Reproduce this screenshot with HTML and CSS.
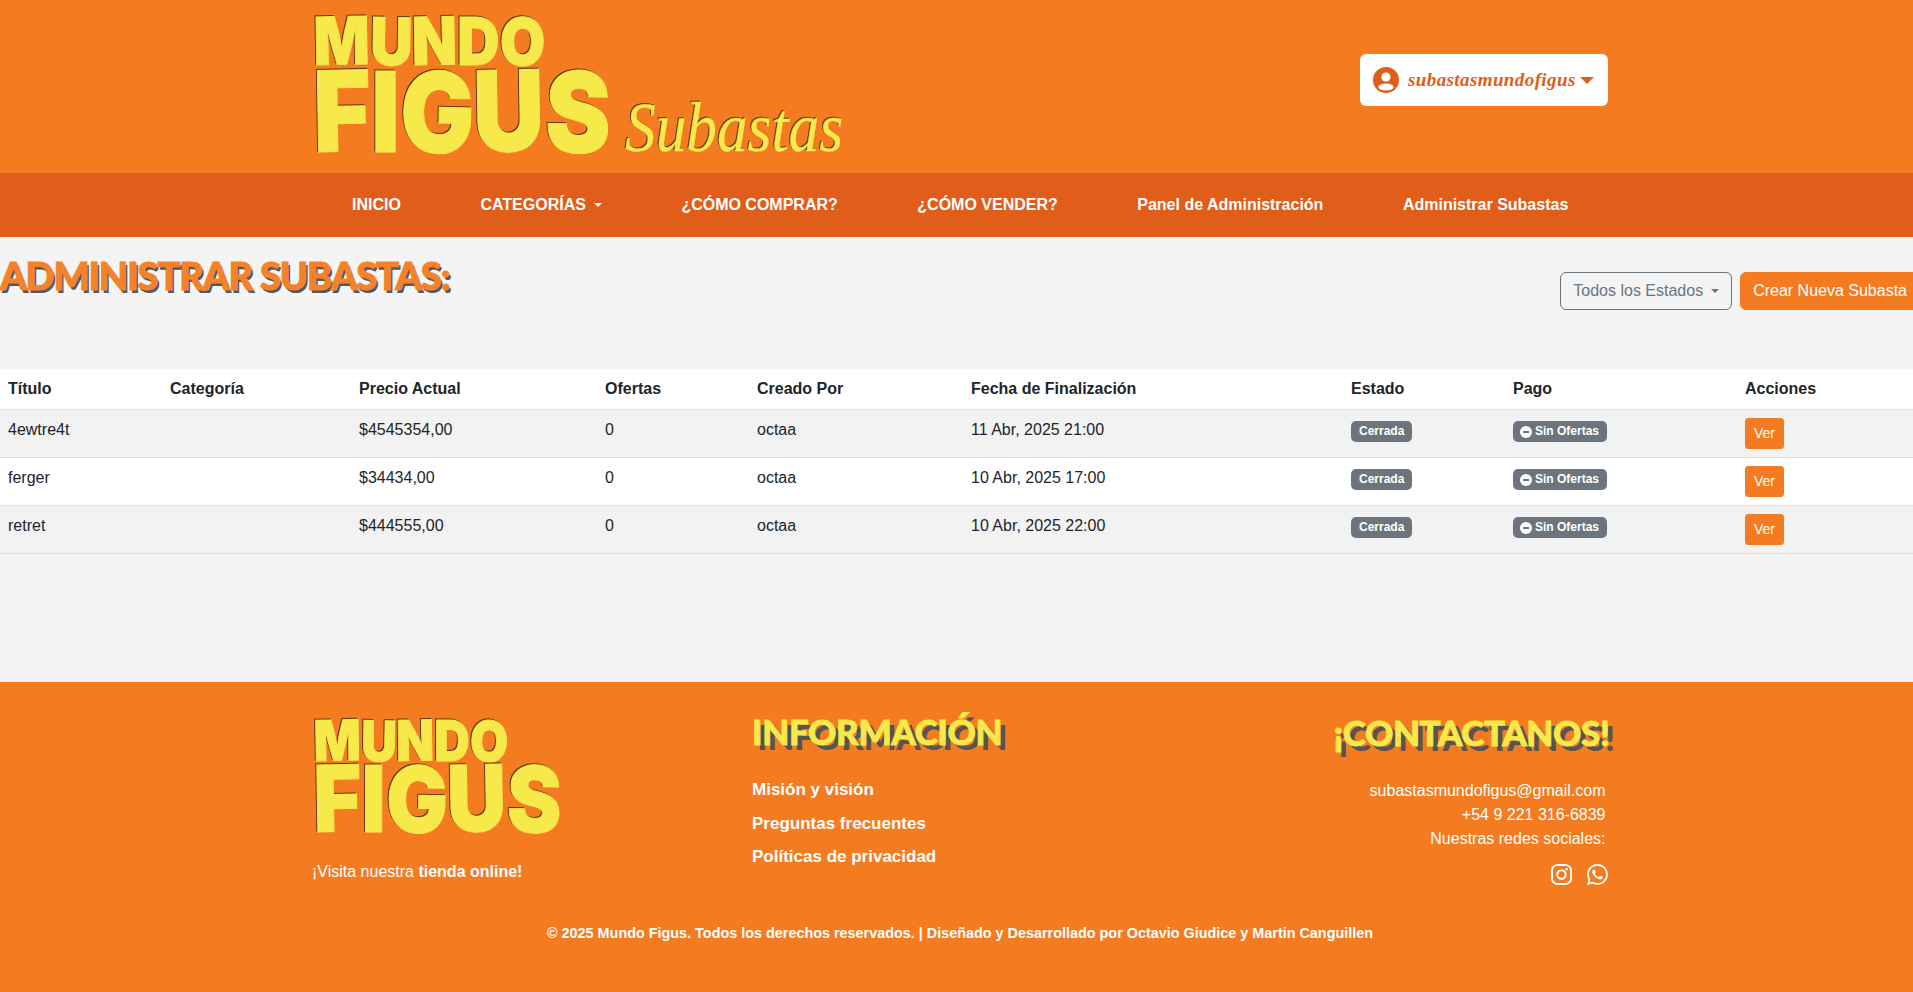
FILE: index.html
```html
<!DOCTYPE html>
<html lang="en">
<head>
  <meta charset="UTF-8">
  <meta name="viewport" content="width=device-width, initial-scale=1.0">
  <title>Mundo Figus Subastas</title>
  <link rel="stylesheet" href="styles.css">
</head>
<body>
  <header class="top-header">
    <div class="wrap top-inner">
      <svg class="logo" width="535" height="150" viewBox="0 0 535 150" role="img" aria-label="Mundo Figus Subastas">
        <text class="logo-mundo" x="0" y="64" textLength="231" lengthAdjust="spacingAndGlyphs" rotate="-1 1 -1 0 1">MUNDO</text>
        <text class="logo-figus" x="0" y="151" textLength="296" lengthAdjust="spacingAndGlyphs" rotate="-1 0 1 -1 1">FIGUS</text>
        <text class="logo-sub" x="311" y="150" textLength="218" lengthAdjust="spacingAndGlyphs">Subastas</text>
      </svg>
      <button class="user-btn" type="button">
        <svg class="user-icon" width="26" height="26" viewBox="0 0 26 26">
          <circle cx="13" cy="13" r="13" fill="#e05d1a"/>
          <circle cx="13" cy="10" r="4.6" fill="#fff"/>
          <ellipse cx="13" cy="20" rx="7.6" ry="3.6" fill="#fff"/>
        </svg>
        <span class="user-name">subastasmundofigus</span>
        <span class="user-caret"></span>
      </button>
    </div>
  </header>

  <nav class="main-nav">
    <div class="wrap nav-inner">
      <a href="#">INICIO</a>
      <a href="#">CATEGORÍAS<span class="caret"></span></a>
      <a href="#">¿CÓMO COMPRAR?</a>
      <a href="#">¿CÓMO VENDER?</a>
      <a href="#">Panel de Administración</a>
      <a href="#">Administrar Subastas</a>
    </div>
  </nav>

  <main class="content">
    <div class="title-row">
      <h1>Administrar Subastas:</h1>
      <div class="title-actions">
        <button class="btn-outline" type="button">Todos los Estados<span class="caret"></span></button>
        <button class="btn-orange" type="button">Crear Nueva Subasta</button>
      </div>
    </div>

    <table class="auctions">
      <colgroup>
        <col class="c-title"><col class="c-cat"><col class="c-price"><col class="c-bids"><col class="c-user"><col class="c-date"><col class="c-state"><col class="c-pay"><col class="c-actions">
      </colgroup>
      <thead>
        <tr>
          <th>Título</th>
          <th>Categoría</th>
          <th>Precio Actual</th>
          <th>Ofertas</th>
          <th>Creado Por</th>
          <th>Fecha de Finalización</th>
          <th>Estado</th>
          <th>Pago</th>
          <th>Acciones</th>
        </tr>
      </thead>
      <tbody>
        <tr>
          <td>4ewtre4t</td>
          <td></td>
          <td>$4545354,00</td>
          <td>0</td>
          <td>octaa</td>
          <td>11 Abr, 2025 21:00</td>
          <td><span class="badge">Cerrada</span></td>
          <td><span class="badge"><span class="dash"></span>Sin Ofertas</span></td>
          <td><button class="btn-orange btn-small" type="button">Ver</button></td>
        </tr>
        <tr>
          <td>ferger</td>
          <td></td>
          <td>$34434,00</td>
          <td>0</td>
          <td>octaa</td>
          <td>10 Abr, 2025 17:00</td>
          <td><span class="badge">Cerrada</span></td>
          <td><span class="badge"><span class="dash"></span>Sin Ofertas</span></td>
          <td><button class="btn-orange btn-small" type="button">Ver</button></td>
        </tr>
        <tr>
          <td>retret</td>
          <td></td>
          <td>$444555,00</td>
          <td>0</td>
          <td>octaa</td>
          <td>10 Abr, 2025 22:00</td>
          <td><span class="badge">Cerrada</span></td>
          <td><span class="badge"><span class="dash"></span>Sin Ofertas</span></td>
          <td><button class="btn-orange btn-small" type="button">Ver</button></td>
        </tr>
      </tbody>
    </table>
  </main>

  <footer class="site-footer">
    <div class="wrap footer-cols">
      <div class="footer-brand">
        <svg class="logo" width="250" height="120" viewBox="0 0 250 120" role="img" aria-label="Mundo Figus">
          <text class="logo-mundo-sm" x="0" y="45" textLength="194" lengthAdjust="spacingAndGlyphs" rotate="-1 1 -1 0 1">MUNDO</text>
          <text class="logo-figus-sm" x="0" y="116" textLength="247" lengthAdjust="spacingAndGlyphs" rotate="-1 0 1 -1 1">FIGUS</text>
        </svg>
        <p>¡Visita nuestra <strong>tienda online!</strong></p>
      </div>
      <div class="footer-info">
        <h2>Información</h2>
        <a href="#">Misión y visión</a>
        <a href="#">Preguntas frecuentes</a>
        <a href="#">Políticas de privacidad</a>
      </div>
      <div class="footer-contact">
        <h2>¡Contactanos!</h2>
        <p>subastasmundofigus@gmail.com</p>
        <p>+54 9 221 316-6839</p>
        <p>Nuestras redes sociales:</p>
        <div class="social">
          <svg width="21" height="21" viewBox="0 0 21 21" fill="none" stroke="#fff" stroke-width="2">
            <rect x="1" y="1" width="19" height="19" rx="5.5"/>
            <circle cx="10.5" cy="10.5" r="4.2"/>
            <circle cx="15.8" cy="5.2" r="1.2" fill="#fff" stroke="none"/>
          </svg>
          <svg width="21" height="21" viewBox="0 0 16 16" fill="#fff">
            <path d="M13.601 2.326A7.85 7.85 0 0 0 7.994 0C3.627 0 .068 3.558.064 7.926c0 1.399.366 2.76 1.057 3.965L0 16l4.204-1.102a7.9 7.9 0 0 0 3.79.965h.004c4.368 0 7.926-3.558 7.93-7.93A7.9 7.9 0 0 0 13.6 2.326zM7.994 14.521a6.6 6.6 0 0 1-3.356-.92l-.24-.144-2.494.654.666-2.433-.156-.251a6.56 6.56 0 0 1-1.007-3.505c0-3.626 2.957-6.584 6.591-6.584a6.56 6.56 0 0 1 4.66 1.931 6.56 6.56 0 0 1 1.928 4.66c-.004 3.639-2.961 6.592-6.592 6.592m3.615-4.934c-.197-.099-1.17-.578-1.353-.646-.182-.065-.315-.099-.445.099-.133.197-.513.646-.627.775-.114.133-.232.148-.43.05-.197-.1-.836-.308-1.592-.985-.59-.525-.985-1.175-1.103-1.372-.114-.198-.011-.304.088-.403.087-.088.197-.232.296-.346.1-.114.133-.198.198-.33.065-.134.034-.248-.015-.347-.05-.099-.445-1.076-.612-1.47-.16-.389-.323-.335-.445-.34-.114-.007-.247-.007-.38-.007a.73.73 0 0 0-.529.247c-.182.198-.691.677-.691 1.654s.71 1.916.81 2.049c.098.133 1.394 2.132 3.383 2.992.47.205.84.326 1.129.418.475.152.904.129 1.246.08.38-.058 1.171-.48 1.338-.943.164-.464.164-.86.114-.943-.049-.084-.182-.133-.38-.232"/>
          </svg>
        </div>
      </div>
    </div>
    <p class="copyright">© 2025 Mundo Figus. Todos los derechos reservados. | Diseñado y Desarrollado por Octavio Giudice y Martin Canguillen</p>
  </footer>
</body>
</html>
```

FILE: styles.css
```css
body {
  margin: 0;
  font-family: "Liberation Sans", Arial, sans-serif;
  font-size: 16px;
  line-height: 24px;
  color: #212529;
  background-color: #f4f4f4;
  overflow-x: hidden;
}

.wrap {
  width: 1296px;
  margin-left: 312px;
}

/* header */
.top-header {
  height: 173px;
  background-color: #f57b20;
}

.top-inner {
  display: flex;
  align-items: flex-start;
  justify-content: space-between;
}

.logo {
  display: block;
  overflow: visible;
}

.top-header .logo {
  margin-top: 1px;
  margin-left: 2px;
}

.logo text {
  font-family: Inter, "Liberation Sans", sans-serif;
  font-weight: 900;
  fill: #f7e94a;
  stroke: #f7e94a;
  stroke-width: 1px;
  filter: drop-shadow(-1px -1px 0 #5a3d10);
}

.logo .logo-mundo {
  font-size: 66px;
}

.logo .logo-figus {
  font-size: 112px;
}

.logo .logo-mundo-sm {
  font-size: 56px;
}

.logo .logo-figus-sm {
  font-size: 92px;
}

.logo .logo-sub {
  font-family: "Liberation Serif", serif;
  font-style: italic;
  font-weight: 400;
  font-size: 70px;
  stroke-width: 0.3px;
}

.user-btn {
  display: flex;
  align-items: center;
  flex-shrink: 0;
  width: 248px;
  height: 52px;
  margin-top: 54px;
  padding: 0 13px;
  border: 0;
  border-radius: 6px;
  background-color: #fff;
}

.user-icon {
  flex-shrink: 0;
}

.user-name {
  margin-left: 9px;
  font-family: "Liberation Serif", serif;
  font-style: italic;
  font-weight: 700;
  font-size: 19px;
  letter-spacing: 0.4px;
  white-space: nowrap;
  color: #e05d1a;
}

.user-caret {
  margin-left: 4px;
  flex-shrink: 0;
  border-top: 7px solid #e05d1a;
  border-left: 7px solid transparent;
  border-right: 7px solid transparent;
}

/* nav */
.main-nav {
  height: 64px;
  background-color: #e05d1a;
}

.nav-inner {
  display: flex;
  height: 64px;
  align-items: center;
}

.nav-inner a {
  flex-shrink: 0;
  padding: 0 39.75px;
  font-weight: 700;
  white-space: nowrap;
  color: #fff;
  text-decoration: none;
}

.nav-inner a:first-child {
  padding-left: 40px;
}

.caret {
  display: inline-block;
  margin-left: 8px;
  vertical-align: 3px;
  border-top: 4.8px solid currentColor;
  border-left: 4.8px solid transparent;
  border-right: 4.8px solid transparent;
}

/* content */
.content {
  height: 445px;
}

.title-row {
  display: flex;
  justify-content: space-between;
  height: 132px;
}

h1 {
  margin: 20px 0 0;
  font-family: Lato, "Liberation Sans", sans-serif;
  font-weight: 900;
  font-size: 38px;
  line-height: 36px;
  letter-spacing: -1.1px;
  text-transform: uppercase;
  color: #f58229;
  -webkit-text-stroke: 1px #f58229;
  text-shadow: 2px 3px 0 #4d5a66;
}

.title-actions {
  display: flex;
  gap: 8px;
  margin-top: 35px;
  margin-right: -7px;
  align-items: flex-start;
}

.btn-outline, .btn-orange {
  height: 38px;
  padding: 6px 12px;
  border-radius: 6px;
  font-family: inherit;
  font-size: 16px;
  line-height: 24px;
  cursor: pointer;
}

.btn-outline {
  border: 1px solid #6c757d;
  background: transparent;
  color: #6c757d;
}

.btn-orange {
  border: 1px solid #f57b20;
  background-color: #f57b20;
  color: #fff;
}

.btn-small {
  display: block;
  height: 31px;
  padding: 4px 8px;
  border-radius: 3px;
  font-size: 14px;
  line-height: 21px;
}

/* table */
.auctions {
  width: 1913px;
  table-layout: fixed;
  border-collapse: collapse;
  background-color: #fff;
}

.c-title { width: 162px; }
.c-cat { width: 189px; }
.c-price { width: 246px; }
.c-bids { width: 152px; }
.c-user { width: 214px; }
.c-date { width: 380px; }
.c-state { width: 162px; }
.c-pay { width: 232px; }
.c-actions { width: 176px; }

.auctions th, .auctions td {
  padding: 8px;
  text-align: left;
  vertical-align: top;
  border-bottom: 1px solid #dee2e6;
}

.auctions th {
  height: 23px;
}

.auctions td {
  height: 31px;
}

.auctions tbody tr:nth-child(odd) {
  background-color: #f2f2f2;
}

.badge {
  display: inline-flex;
  align-items: center;
  height: 21px;
  margin-top: 3px;
  padding: 0 8px;
  vertical-align: top;
  border-radius: 5px;
  background-color: #6c757d;
  color: #fff;
  font-size: 12px;
  font-weight: 700;
  line-height: 21px;
}

.dash {
  position: relative;
  width: 12px;
  height: 12px;
  margin-left: -1px;
  margin-right: 3px;
  border-radius: 50%;
  background-color: #fff;
}

.dash::after {
  content: "";
  position: absolute;
  left: 3px;
  top: 5px;
  width: 6px;
  height: 2px;
  background-color: #6c757d;
}

/* footer */
.site-footer {
  height: 310px;
  background-color: #f57b20;
  color: #fff;
  overflow: hidden;
}

.footer-cols {
  display: flex;
  justify-content: space-between;
}

.footer-cols p {
  margin: 0;
}

.footer-cols h2 {
  margin: 0 0 27px;
  font-family: Lato, "Liberation Sans", sans-serif;
  font-weight: 900;
  font-size: 35px;
  line-height: 40px;
  letter-spacing: -0.4px;
  text-transform: uppercase;
  color: #f7e94a;
  -webkit-text-stroke: 0.8px #f7e94a;
  text-shadow: 5px 5px 0 #555;
}

.footer-brand {
  width: 440px;
  padding-top: 34px;
}

.footer-brand .logo {
  margin-left: 2px;
}

.footer-brand p {
  margin-top: 24px;
}

.footer-info {
  flex: 1;
  padding-top: 29px;
}

.footer-info a {
  display: block;
  margin-bottom: 9.5px;
  font-size: 17px;
  font-weight: 700;
  color: #fff;
  text-decoration: none;
}

.footer-contact {
  padding-top: 30px;
  padding-right: 2.5px;
  text-align: right;
}

.footer-contact h2 {
  margin-right: -4px;
}

.social {
  display: flex;
  justify-content: flex-end;
  gap: 15px;
  margin-top: 13px;
  margin-right: -2.5px;
}

.copyright {
  margin: 36px 0 0;
  text-align: center;
  font-size: 14.4px;
  font-weight: 700;
  padding-left: 7px;
}
```
